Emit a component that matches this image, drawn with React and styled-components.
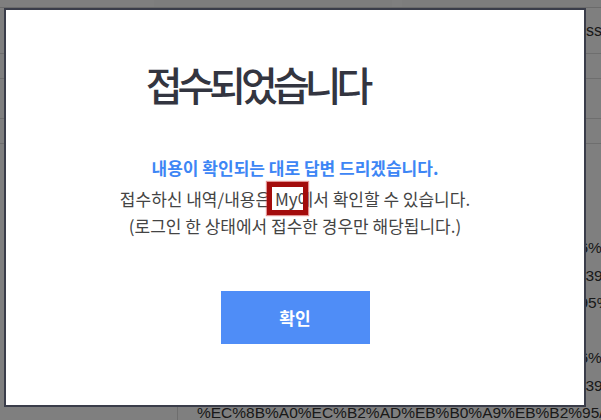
import React from "react";
import styled, { createGlobalStyle } from "styled-components";

const GlobalStyle = createGlobalStyle`
  html, body {
    margin: 0;
    padding: 0;
    overflow: hidden;
    background: #fff;
  }
  body {
    font-family: "Noto Sans CJK KR", "Noto Sans", sans-serif;
  }
`;

const bgLines = [
  { text: "%EB%B0%A9%EB%B2%95%EC%9D%B8%EC%A6%9D%EC%84%9C%EB%B0%9C%E6%EC1", align: "right" },
  { text: "%EC%8B%A0%EC%B2%AD%EB%B0%A9%EB%B2%95%EC%B0%B8%EC%A1%B039-%E", align: "right" },
  { text: "%EC%8B%A0%EC%B2%AD%EB%B0%A9%EB%B2%95%EC%84%9C%EB%B2%EB%95%CE", align: "right" },
  { text: "%EC%8B%A0%EC%B2%AD", align: "left" },
  { text: "%EB%B0%A9%EB%B2%95%EC%9D%B8%EC%A6%9D%EC%84%9C%EB%B0%9C%E6%EC1", align: "right" },
  { text: "%EC%8B%A0%EC%B2%AD%EB%B0%A9%EB%B2%95%EC%B0%B8%EC%A1%B039-%E", align: "right" },
  { text: "%EC%8B%A0%EC%B2%AD%EB%B0%A9%EB%B2%95/", align: "left" },
];

export default function App() {
  return (
    <>
      <GlobalStyle />
      <Page>
        <TopStrip>
          <TopCell />
          <TopCell />
        </TopStrip>
        <HeadRow>
          <HeadLabel>Address</HeadLabel>
        </HeadRow>
        <Row $h={25} />
        <Row $h={40} />
        <Row $h={25} />
        <BodyGrid>
          <SideCell />
          <UrlCell>
            {bgLines.map((line, i) => (
              <UrlLine key={i} $align={line.align}>
                <span>{line.text}</span>
              </UrlLine>
            ))}
          </UrlCell>
        </BodyGrid>
      </Page>

      <Overlay>
        <Modal>
          <Title>접수되었습니다</Title>
          <Message>
            <Highlight>내용이 확인되는 대로 답변 드리겠습니다.</Highlight>
            <Line>
              접수하신 내역/내용은 <Marked>My</Marked>에서 확인할 수 있습니다.
            </Line>
            <Line>(로그인 한 상태에서 접수한 경우만 해당됩니다.)</Line>
          </Message>
          <ConfirmButton type="button">확인</ConfirmButton>
        </Modal>
      </Overlay>
    </>
  );
}

/* ---------- page behind the dialog ---------- */

const Page = styled.div`
  width: 640px;
  color: #333;
  font-family: "Liberation Sans", Arial, sans-serif;
  font-size: 15.5px;
`;

const TopStrip = styled.div`
  height: 7px;
  display: flex;
  gap: 10px;
  padding-left: 154px;
  border-bottom: 1px solid #d6d6d6;
`;

const TopCell = styled.div`
  flex: 1;
  background: #fafafa;
`;

const HeadRow = styled.div`
  height: 45px;
  display: flex;
  align-items: center;
  justify-content: flex-end;
  padding-right: 38px;
  box-sizing: border-box;
  font-size: 16px;
`;

const HeadLabel = styled.span`
  color: #333;
`;

const Row = styled.div`
  height: ${(p) => p.$h}px;
  border-top: 1px solid #dcdcdc;
  box-sizing: border-box;
`;

const BodyGrid = styled.div`
  display: grid;
  grid-template-columns: 178px 1fr;
  border-top: 1px solid #dcdcdc;
  min-height: 300px;
`;

const SideCell = styled.div`
  border-right: 1px solid #dcdcdc;
`;

const UrlCell = styled.div`
  padding: 90px 8px 0 19px;
  display: flex;
  flex-direction: column;
  min-width: 0;
`;

const UrlLine = styled.div`
  height: 27.5px;
  line-height: 27.5px;
  white-space: nowrap;
  overflow: hidden;
  display: flex;
  justify-content: ${(p) => (p.$align === "right" ? "flex-end" : "flex-start")};

  span {
    flex: none;
  }
`;

/* ---------- dialog ---------- */

const Overlay = styled.div`
  position: fixed;
  inset: 0;
  background: rgba(0, 0, 0, 0.5);
  padding: 8px 0 0 4px;
`;

const Modal = styled.div`
  width: 582px;
  height: 399px;
  box-sizing: border-box;
  border: 2px solid #3a3d4a;
  background: #fff;
  display: flex;
  flex-direction: column;
  align-items: center;
  padding-top: 50px;
`;

const Title = styled.h1`
  margin: 0;
  padding-right: 76px;
  font-size: 40px;
  line-height: 48px;
  font-weight: 500;
  letter-spacing: -5px;
  color: #333540;
`;

const Message = styled.div`
  margin-top: 46px;
  display: flex;
  flex-direction: column;
  align-items: center;
  color: #444;
  font-size: 17px;
  line-height: 28px;
`;

const Highlight = styled.p`
  margin: 0 0 4px;
  font-size: 17px;
  font-weight: 700;
  color: #3d86f5;
`;

const Line = styled.p`
  margin: 0;
  margin-top: -1px;
`;

const Marked = styled.span`
  position: relative;

  &::after {
    content: "";
    position: absolute;
    left: -8px;
    right: -10px;
    top: -4px;
    bottom: -4px;
    border: 5px solid #a30c0c;
    box-shadow: 0 0 1px 1px rgba(200, 40, 40, 0.5);
  }
`;

const ConfirmButton = styled.button`
  margin-top: 51px;
  width: 149px;
  height: 53px;
  border: none;
  border-radius: 0;
  background: #4f8df7;
  color: #fff;
  font-family: "Noto Sans CJK KR", "Noto Sans", sans-serif;
  font-size: 17px;
  font-weight: 700;
  cursor: pointer;
`;
